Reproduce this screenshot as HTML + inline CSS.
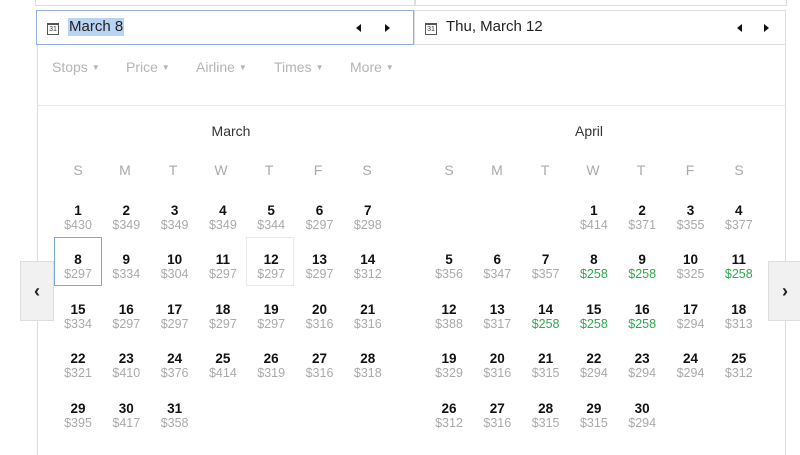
<!DOCTYPE html>
<html><head><meta charset="utf-8"><style>
*{box-sizing:border-box;margin:0;padding:0}
body{width:800px;height:450px;overflow:hidden;background:#fff;font-family:"Liberation Sans",Arial,sans-serif;position:relative}
.abs{position:absolute}
.field{position:absolute;top:10px;height:35px;background:#fff;font-size:15px;color:#222}
.ic{position:absolute;left:10px;top:12px;width:12px;height:12px;border:1px solid #555;font-size:7px;line-height:9px;text-align:center;color:#333;border-top-width:2px}
.tri{position:absolute;top:13px;width:0;height:0;border-top:4px solid transparent;border-bottom:4px solid transparent}
.flt{position:absolute;top:59px;font-size:14px;color:#b4b4b4}
.flt span{font-size:8px;margin-left:4px;vertical-align:2px}
.mt{position:absolute;top:123px;font-size:14px;color:#333;text-align:center;width:100px}
.wd{position:absolute;top:162px;font-size:14px;color:#aaa;width:48px;text-align:center}
.c{position:absolute;width:48px;height:49px;text-align:center}
.c b{position:absolute;top:15px;left:0;right:0;font-size:13.5px;color:#111;line-height:14px}
.c i{position:absolute;top:29px;left:0;right:0;font-style:normal;font-size:12.5px;color:#aaa;line-height:14px}
.c i.g{color:#2fa84f}
.nav{position:absolute;top:261px;height:60px;background:#f1f1f1;border:1px solid #ddd;font-size:18px;font-weight:bold;color:#222;text-align:center;line-height:58px}
</style></head><body>
<div class="abs" style="left:35px;top:0;width:380px;height:6px;border:1px solid #ddd;border-top:none"></div>
<div class="abs" style="left:415px;top:0;width:372px;height:6px;border:1px solid #ddd;border-top:none"></div>
<div class="abs" style="left:37px;top:45px;width:749px;height:410px;border-left:1px solid #ddd;border-right:1px solid #ddd"></div>
<div class="abs" style="left:37px;top:105px;width:749px;height:1px;background:#e6e6e6"></div>
<div class="field" style="left:36px;width:378px;border:1px solid #8fb2e3">
<div class="ic">31</div>
<span class="abs" style="left:31px;top:7px;background:#b9d3f2;padding:0 1px;line-height:18px">March 8</span>
<div class="tri" style="left:319px;border-right:5px solid #111"></div>
<div class="tri" style="left:348px;border-left:5px solid #111"></div>
</div>
<div class="field" style="left:414px;width:372px;border:1px solid #ddd">
<div class="ic">31</div>
<span class="abs" style="left:31px;top:7px;line-height:18px">Thu, March 12</span>
<div class="tri" style="left:322px;border-right:5px solid #111"></div>
<div class="tri" style="left:349px;border-left:5px solid #111"></div>
</div>
<div class="flt" style="left:52px">Stops<span>▼</span></div>
<div class="flt" style="left:126px">Price<span>▼</span></div>
<div class="flt" style="left:196px">Airline<span>▼</span></div>
<div class="flt" style="left:274px">Times<span>▼</span></div>
<div class="flt" style="left:350px">More<span>▼</span></div>
<div class="mt" style="left:181px">March</div>
<div class="mt" style="left:539px">April</div>
<div class="wd" style="left:54px">S</div><div class="wd" style="left:101px">M</div><div class="wd" style="left:149px">T</div><div class="wd" style="left:197px">W</div><div class="wd" style="left:245px">T</div><div class="wd" style="left:294px">F</div><div class="wd" style="left:343px">S</div>
<div class="wd" style="left:425px">S</div><div class="wd" style="left:473px">M</div><div class="wd" style="left:521px">T</div><div class="wd" style="left:569px">W</div><div class="wd" style="left:617px">T</div><div class="wd" style="left:666px">F</div><div class="wd" style="left:715px">S</div>
<div id="cal"></div>
<div class="abs" style="left:54px;top:237px;width:48px;height:49px;border:1px solid #7ea6e0"></div>
<div class="abs" style="left:246px;top:237px;width:48px;height:49px;border:1px solid #e8e8e8"></div>
<div class="nav" style="left:20px;width:34px">&lsaquo;</div>
<div class="nav" style="left:768px;width:34px">&rsaquo;</div>
<script>
var mar=[430,349,349,349,344,297,298,297,334,304,297,297,297,312,334,297,297,297,297,316,316,321,410,376,414,319,316,318,395,417,358];
var apr=[414,371,355,377,356,347,357,258,258,325,258,388,317,258,258,258,294,313,329,316,315,294,294,294,312,312,316,315,315,294];
var green={8:1,9:1,11:1,14:1,15:1,16:1};
var h='';
function cx(base,col){return base+col*48.3;}
mar.forEach(function(p,i){var d=i+1,col=i%7,row=Math.floor(i/7);
h+='<div class="c" style="left:'+cx(54,col)+'px;top:'+(188.5+row*49.5)+'px"><b>'+d+'</b><i>$'+p+'</i></div>';});
apr.forEach(function(p,i){var d=i+1,k=i+3,col=k%7,row=Math.floor(k/7);
h+='<div class="c" style="left:'+cx(425,col)+'px;top:'+(188.5+row*49.5)+'px"><b>'+d+'</b><i'+(green[d]?' class="g"':'')+'>$'+p+'</i></div>';});
document.getElementById('cal').innerHTML=h;
</script>
</body></html>
